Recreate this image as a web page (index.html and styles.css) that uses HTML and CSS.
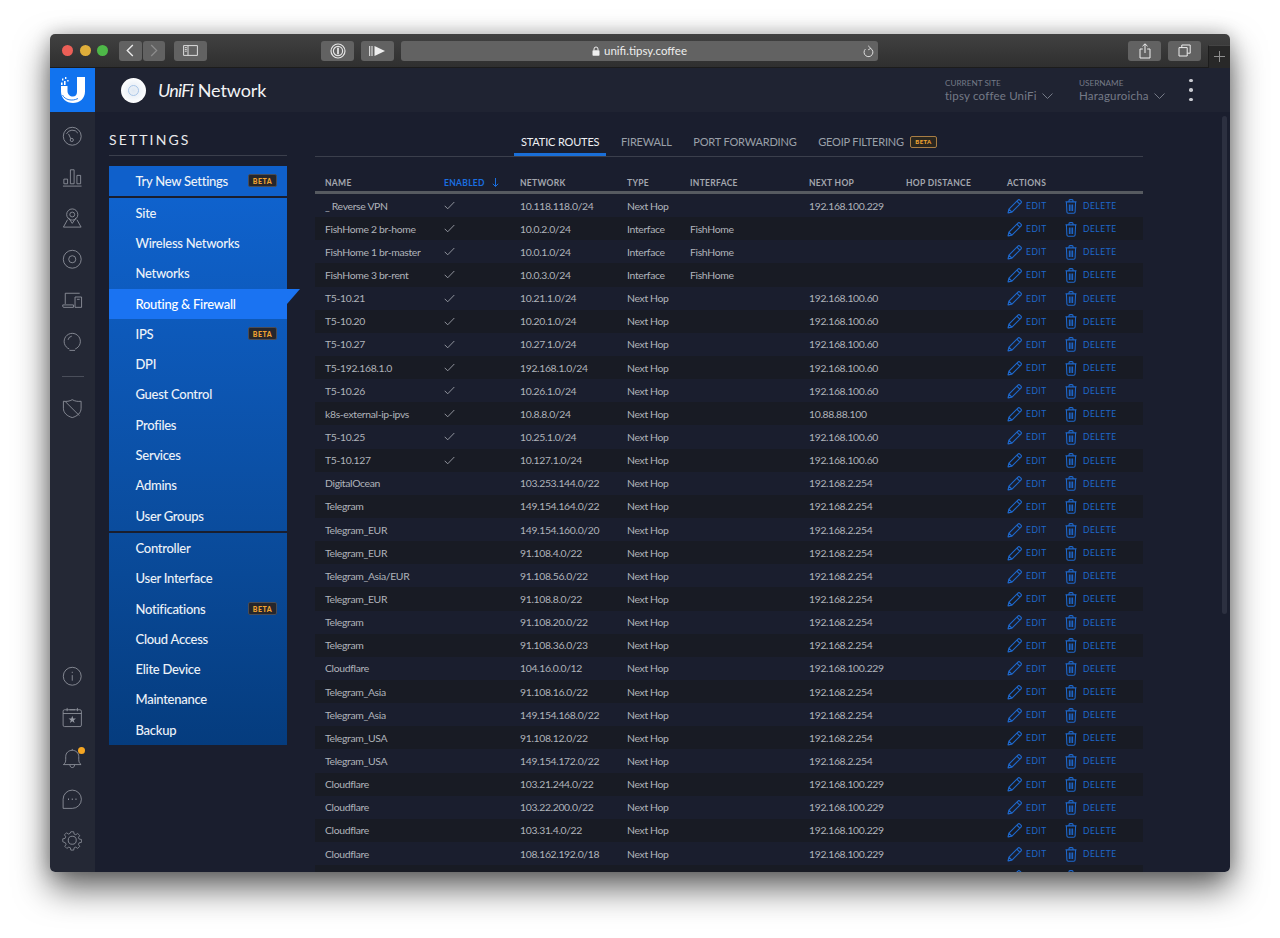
FILE: index.html
```html
<!DOCTYPE html>
<html lang="en">
<head>
<meta charset="utf-8">
<title>UniFi Network</title>
<link rel="stylesheet" href="styles.css">
</head>
<body>
<svg class="defs" width="0" height="0" aria-hidden="true">
  <symbol id="pencil" viewBox="0 0 14 14"><path d="M1 13l.8-3.6L10.2 1a1.3 1.3 0 0 1 1.8 0l1 1a1.3 1.3 0 0 1 0 1.8L4.6 12.2zM1.8 9.4l2.8 2.8M9.2 2l2.8 2.8" fill="none" stroke="currentColor" stroke-width="1.1" stroke-linejoin="round"/></symbol>
  <symbol id="trash" viewBox="0 0 12 15"><path d="M1.4 3h9.2l-.5 10a1.4 1.4 0 0 1-1.4 1.3H3.3A1.4 1.4 0 0 1 1.9 13zM.5 2.8h11M4 2.6V1.6a1 1 0 0 1 1-1h2a1 1 0 0 1 1 1v1M4.4 5.5v6.4M6 5.5v6.4M7.6 5.5v6.4" fill="none" stroke="currentColor" stroke-width="1.1"/></symbol>
  <symbol id="check" viewBox="0 0 11 9"><path d="M.7 4.8l3 3L10.3 1" fill="none" stroke="currentColor" stroke-width=".9"/></symbol>
</svg>

<div class="window">
  <div class="titlebar">
    <div class="lights"><i class="light red"></i><i class="light yellow"></i><i class="light green"></i></div>
    <div class="navbtns">
      <span class="btn btn-nav"><svg width="8" height="13" viewBox="0 0 8 13"><path d="M6.8 1L1.3 6.5l5.5 5.5" fill="none" stroke="#e8e8e8" stroke-width="1.4"/></svg></span>
      <span class="btn btn-nav"><svg width="8" height="13" viewBox="0 0 8 13"><path d="M1.2 1l5.5 5.5L1.2 12" fill="none" stroke="#8c8c8c" stroke-width="1.2"/></svg></span>
    </div>
    <span class="btn btn-side"><svg width="15" height="11" viewBox="0 0 15 11"><path d="M.6.6h13.8v9.8H.6zM5 .6v9.8M1.8 2.6h2M1.8 4.4h2M1.8 6.2h2" fill="none" stroke="#ddd" stroke-width="1"/></svg></span>
    <span class="btn btn-pass"><svg width="16" height="16" viewBox="0 0 16 16"><circle cx="8" cy="8" r="7" fill="none" stroke="#e4e4e4" stroke-width="1.2"/><circle cx="8" cy="8" r="4.6" fill="none" stroke="#e4e4e4" stroke-width="1.2"/><path d="M8 4.8v6.4" stroke="#e4e4e4" stroke-width="1.8"/></svg></span>
    <span class="btn btn-ext"><svg width="17" height="10" viewBox="0 0 17 10"><path d="M.7 0v10M3 0v10" stroke="#eee" stroke-width="1"/><path d="M5.5 0L16 5 5.5 10z" fill="#eee"/></svg></span>
    <div class="address">
      <span class="url"><svg width="8" height="10" viewBox="0 0 8 10"><path d="M2 4.4V3a2 2 0 0 1 4 0v1.4" fill="none" stroke="#eee" stroke-width="1"/><rect x=".5" y="4.2" width="7" height="5.5" rx=".8" fill="#eee"/></svg>unifi.tipsy.coffee</span>
      <svg class="reload" width="11" height="13" viewBox="0 0 11 13"><path d="M7.6 3.4A4.4 4.4 0 1 1 2.4 4.1M5.2 .8l2.6 2.6-2.6 1.4" fill="none" stroke="#ddd" stroke-width="1"/></svg>
    </div>
    <span class="btn btn-share"><svg width="12" height="16" viewBox="0 0 12 16"><path d="M3.8 6H1v9h10V6H8.2M6 10V1M3.5 3.2L6 .8l2.5 2.4" fill="none" stroke="#eee" stroke-width="1"/></svg></span>
    <span class="btn btn-tabs"><svg width="13" height="13" viewBox="0 0 13 13"><path d="M3.8 3.6V1h8.4v8.2H9.4M1 3.6h8.2V12H1z" fill="none" stroke="#eee" stroke-width="1"/></svg></span>
    <span class="newtab"><svg width="11" height="11" viewBox="0 0 11 11"><path d="M5.5 0v11M0 5.5h11" stroke="#8f8f8f" stroke-width="1"/></svg></span>
  </div>

  <div class="app">
    <aside class="rail">
      <div class="logo">
        <svg width="26" height="28" viewBox="0 0 26 28">
          <path d="M17 1h8v14.500C25 22.500 19.500 27 13 27 6.500 27 1 22.500 1 15.500V10h6.500v5c0 3.500 2.500 5.500 5.500 5.500 2 0 4-1.500 4-4.500z" fill="#fff"/>
          <path d="M2.500 19c2.500 5 9.500 6.500 15.500 3.500" fill="none" stroke="#1173ef" stroke-width=".9"/>
          <path d="M1 6.500h1.600v2.500H1zM4 5h1.600v4H4zM2 2.500h1.400v2H2zM5 1h1.400v2H5zM7.200 4h1.400v1.600H7.200z" fill="#fff"/>
        </svg>
      </div>
      <div class="rail-top">
        <svg class="ri" viewBox="0 0 22 22"><circle cx="11" cy="11" r="9.600"/><path d="M4.800 8.500A7 7 0 0 1 17 7.600M9.500 13.800L7 8.500"/><circle cx="10.500" cy="15" r="1.700"/></svg>
        <svg class="ri" viewBox="0 0 22 22"><path d="M1 20.500h20M2 13h4v5H2zM9 3h4v15H9zM16 9h4v9h-4z"/></svg>
        <svg class="ri" viewBox="0 0 22 22"><circle cx="11" cy="7" r="6"/><circle cx="11" cy="7" r="2.600"/><path d="M6 12.500L1.500 20.500h19L16 12.500M7 10.500l4 6 4-6"/></svg>
        <svg class="ri" viewBox="0 0 22 22"><circle cx="11" cy="11" r="9.600"/><circle cx="11" cy="11" r="3.800"/></svg>
        <svg class="ri" viewBox="0 0 22 22"><path d="M3.500 15V3.500h15.500M.8 16h11.500v2.600H2a1.200 1.200 0 0 1-1.200-1.200zM14 7.500h7v11.100h-7zM16 10h3"/></svg>
        <svg class="ri" viewBox="0 0 22 22"><path d="M14.200 19.300a8.700 8.700 0 1 0-6.400 0M8 20.800h6M10.500 5.500a5 5 0 0 0-4 4"/></svg>
        <i class="rail-rule"></i>
        <svg class="ri" viewBox="0 0 22 22"><path d="M1.500 3.500C5 4 8 3.500 11 1.800c3 1.700 6 2.200 9.500 1.700V11c0 5-4 8.500-9.500 10C5.500 19.500 1.500 16 1.500 11zM3.500 3.800l15 15"/></svg>
      </div>
      <div class="rail-bottom">
        <svg class="ri" viewBox="0 0 22 22"><circle cx="11" cy="11" r="9.600"/><path d="M11 9.800v6M11 6.200v1.400"/></svg>
        <svg class="ri" viewBox="0 0 22 22"><rect x="1.200" y="3" width="19.600" height="18" rx="1.500"/><path d="M1.200 7h19.600M5.500 1v3.500M16.500 1v3.500M8 3h6"/><path class="star" d="M11 9.500l1 2.900h3l-2.400 1.800.9 2.900-2.500-1.800-2.500 1.800.9-2.900L7 12.400h3z"/></svg>
        <span class="bell">
          <svg class="ri" viewBox="0 0 22 22"><path d="M1.500 17.800c1.800-1.200 2.500-3 2.500-5.300V9.200C4 5.300 7 2.500 11 2.500s7 2.800 7 6.700v3.300c0 2.300.7 4.100 2.500 5.300zM8.500 18c0 1.800 1 3 2.500 3s2.500-1.200 2.500-3M11 1v1.500"/></svg>
          <i class="bell-dot"></i>
        </span>
        <svg class="ri" viewBox="0 0 22 22"><path d="M1.200 11A9.800 9.800 0 1 1 11 20.800H1.200z"/><path class="dots" d="M6.500 11h1M10.500 11h1M14.500 11h1"/></svg>
        <svg class="ri" viewBox="0 0 22 22"><circle cx="11" cy="11" r="4.300"/><path d="M9.300 1h3.400l.5 2.700 1.900.8 2.300-1.500 2.400 2.400-1.500 2.300.8 1.900 2.700.5v3.400l-2.700.5-.8 1.900 1.500 2.300-2.400 2.400-2.300-1.500-1.900.8-.5 2.700H9.300l-.5-2.700-1.900-.8-2.300 1.500-2.400-2.400 1.500-2.300-.8-1.900L-.2 12.700V9.300l2.700-.5.8-1.900-1.500-2.300 2.400-2.400 2.300 1.500 1.900-.8z" transform="translate(1 1) scale(.91)"/></svg>
      </div>
    </aside>

    <div class="content">
      <header class="topbar">
        <div class="brand">
          <span class="ap"><i></i></span>
          <span class="brand-name"><em>UniFi</em> Network</span>
        </div>
        <div class="picker picker-site">
          <span class="picker-label">CURRENT SITE</span>
          <span class="picker-value">tipsy coffee UniFi <svg width="11" height="6" viewBox="0 0 11 6"><path d="M.5.500l5 5 5-5" fill="none" stroke="currentColor"/></svg></span>
        </div>
        <div class="picker picker-user">
          <span class="picker-label">USERNAME</span>
          <span class="picker-value">Haraguroicha <svg width="11" height="6" viewBox="0 0 11 6"><path d="M.5.500l5 5 5-5" fill="none" stroke="currentColor"/></svg></span>
        </div>
        <div class="kebab"><i></i><i></i><i></i></div>
      </header>

      <main class="main">
        <section class="settings">
          <h1 class="settings-title">SETTINGS</h1>
          <nav class="menu">
            <div class="group group-a"><a class="item">Try New Settings<b class="beta">BETA</b></a></div>
            <div class="group group-b">
              <a class="item">Site</a>
              <a class="item">Wireless Networks</a>
              <a class="item">Networks</a>
              <a class="item active">Routing &amp; Firewall</a>
              <a class="item">IPS<b class="beta">BETA</b></a>
              <a class="item">DPI</a>
              <a class="item">Guest Control</a>
              <a class="item">Profiles</a>
              <a class="item">Services</a>
              <a class="item">Admins</a>
              <a class="item">User Groups</a>
            </div>
            <div class="group group-c">
              <a class="item">Controller</a>
              <a class="item">User Interface</a>
              <a class="item">Notifications<b class="beta">BETA</b></a>
              <a class="item">Cloud Access</a>
              <a class="item">Elite Device</a>
              <a class="item">Maintenance</a>
              <a class="item">Backup</a>
            </div>
          </nav>
        </section>

        <section class="routes">
          <div class="tabs">
            <a class="tab current">STATIC ROUTES</a>
            <a class="tab">FIREWALL</a>
            <a class="tab">PORT FORWARDING</a>
            <a class="tab">GEOIP FILTERING<b class="beta beta-outline">BETA</b></a>
          </div>
          <div class="table">
            <div class="row head"><span>NAME</span><span class="sorted">ENABLED <svg width="7" height="9" viewBox="0 0 7 9"><path d="M3.500 0v8.400M.8 5.800l2.700 2.700 2.700-2.700" fill="none" stroke="currentColor"/></svg></span><span>NETWORK</span><span>TYPE</span><span>INTERFACE</span><span>NEXT HOP</span><span>HOP DISTANCE</span><span>ACTIONS</span></div>
            <div class="row"><span>_ Reverse VPN</span><span><svg class="ck"><use href="#check"/></svg></span><span>10.118.118.0/24</span><span>Next Hop</span><span></span><span>192.168.100.229</span><span></span><span class="act"><svg class="pen"><use href="#pencil"/></svg><a class="edit">EDIT</a><svg class="bin"><use href="#trash"/></svg><a>DELETE</a></span></div>
            <div class="row"><span>FishHome 2 br-home</span><span><svg class="ck"><use href="#check"/></svg></span><span>10.0.2.0/24</span><span>Interface</span><span>FishHome</span><span></span><span></span><span class="act"><svg class="pen"><use href="#pencil"/></svg><a class="edit">EDIT</a><svg class="bin"><use href="#trash"/></svg><a>DELETE</a></span></div>
            <div class="row"><span>FishHome 1 br-master</span><span><svg class="ck"><use href="#check"/></svg></span><span>10.0.1.0/24</span><span>Interface</span><span>FishHome</span><span></span><span></span><span class="act"><svg class="pen"><use href="#pencil"/></svg><a class="edit">EDIT</a><svg class="bin"><use href="#trash"/></svg><a>DELETE</a></span></div>
            <div class="row"><span>FishHome 3 br-rent</span><span><svg class="ck"><use href="#check"/></svg></span><span>10.0.3.0/24</span><span>Interface</span><span>FishHome</span><span></span><span></span><span class="act"><svg class="pen"><use href="#pencil"/></svg><a class="edit">EDIT</a><svg class="bin"><use href="#trash"/></svg><a>DELETE</a></span></div>
            <div class="row"><span>T5-10.21</span><span><svg class="ck"><use href="#check"/></svg></span><span>10.21.1.0/24</span><span>Next Hop</span><span></span><span>192.168.100.60</span><span></span><span class="act"><svg class="pen"><use href="#pencil"/></svg><a class="edit">EDIT</a><svg class="bin"><use href="#trash"/></svg><a>DELETE</a></span></div>
            <div class="row"><span>T5-10.20</span><span><svg class="ck"><use href="#check"/></svg></span><span>10.20.1.0/24</span><span>Next Hop</span><span></span><span>192.168.100.60</span><span></span><span class="act"><svg class="pen"><use href="#pencil"/></svg><a class="edit">EDIT</a><svg class="bin"><use href="#trash"/></svg><a>DELETE</a></span></div>
            <div class="row"><span>T5-10.27</span><span><svg class="ck"><use href="#check"/></svg></span><span>10.27.1.0/24</span><span>Next Hop</span><span></span><span>192.168.100.60</span><span></span><span class="act"><svg class="pen"><use href="#pencil"/></svg><a class="edit">EDIT</a><svg class="bin"><use href="#trash"/></svg><a>DELETE</a></span></div>
            <div class="row"><span>T5-192.168.1.0</span><span><svg class="ck"><use href="#check"/></svg></span><span>192.168.1.0/24</span><span>Next Hop</span><span></span><span>192.168.100.60</span><span></span><span class="act"><svg class="pen"><use href="#pencil"/></svg><a class="edit">EDIT</a><svg class="bin"><use href="#trash"/></svg><a>DELETE</a></span></div>
            <div class="row"><span>T5-10.26</span><span><svg class="ck"><use href="#check"/></svg></span><span>10.26.1.0/24</span><span>Next Hop</span><span></span><span>192.168.100.60</span><span></span><span class="act"><svg class="pen"><use href="#pencil"/></svg><a class="edit">EDIT</a><svg class="bin"><use href="#trash"/></svg><a>DELETE</a></span></div>
            <div class="row"><span>k8s-external-ip-ipvs</span><span><svg class="ck"><use href="#check"/></svg></span><span>10.8.8.0/24</span><span>Next Hop</span><span></span><span>10.88.88.100</span><span></span><span class="act"><svg class="pen"><use href="#pencil"/></svg><a class="edit">EDIT</a><svg class="bin"><use href="#trash"/></svg><a>DELETE</a></span></div>
            <div class="row"><span>T5-10.25</span><span><svg class="ck"><use href="#check"/></svg></span><span>10.25.1.0/24</span><span>Next Hop</span><span></span><span>192.168.100.60</span><span></span><span class="act"><svg class="pen"><use href="#pencil"/></svg><a class="edit">EDIT</a><svg class="bin"><use href="#trash"/></svg><a>DELETE</a></span></div>
            <div class="row"><span>T5-10.127</span><span><svg class="ck"><use href="#check"/></svg></span><span>10.127.1.0/24</span><span>Next Hop</span><span></span><span>192.168.100.60</span><span></span><span class="act"><svg class="pen"><use href="#pencil"/></svg><a class="edit">EDIT</a><svg class="bin"><use href="#trash"/></svg><a>DELETE</a></span></div>
            <div class="row"><span>DigitalOcean</span><span></span><span>103.253.144.0/22</span><span>Next Hop</span><span></span><span>192.168.2.254</span><span></span><span class="act"><svg class="pen"><use href="#pencil"/></svg><a class="edit">EDIT</a><svg class="bin"><use href="#trash"/></svg><a>DELETE</a></span></div>
            <div class="row"><span>Telegram</span><span></span><span>149.154.164.0/22</span><span>Next Hop</span><span></span><span>192.168.2.254</span><span></span><span class="act"><svg class="pen"><use href="#pencil"/></svg><a class="edit">EDIT</a><svg class="bin"><use href="#trash"/></svg><a>DELETE</a></span></div>
            <div class="row"><span>Telegram_EUR</span><span></span><span>149.154.160.0/20</span><span>Next Hop</span><span></span><span>192.168.2.254</span><span></span><span class="act"><svg class="pen"><use href="#pencil"/></svg><a class="edit">EDIT</a><svg class="bin"><use href="#trash"/></svg><a>DELETE</a></span></div>
            <div class="row"><span>Telegram_EUR</span><span></span><span>91.108.4.0/22</span><span>Next Hop</span><span></span><span>192.168.2.254</span><span></span><span class="act"><svg class="pen"><use href="#pencil"/></svg><a class="edit">EDIT</a><svg class="bin"><use href="#trash"/></svg><a>DELETE</a></span></div>
            <div class="row"><span>Telegram_Asia/EUR</span><span></span><span>91.108.56.0/22</span><span>Next Hop</span><span></span><span>192.168.2.254</span><span></span><span class="act"><svg class="pen"><use href="#pencil"/></svg><a class="edit">EDIT</a><svg class="bin"><use href="#trash"/></svg><a>DELETE</a></span></div>
            <div class="row"><span>Telegram_EUR</span><span></span><span>91.108.8.0/22</span><span>Next Hop</span><span></span><span>192.168.2.254</span><span></span><span class="act"><svg class="pen"><use href="#pencil"/></svg><a class="edit">EDIT</a><svg class="bin"><use href="#trash"/></svg><a>DELETE</a></span></div>
            <div class="row"><span>Telegram</span><span></span><span>91.108.20.0/22</span><span>Next Hop</span><span></span><span>192.168.2.254</span><span></span><span class="act"><svg class="pen"><use href="#pencil"/></svg><a class="edit">EDIT</a><svg class="bin"><use href="#trash"/></svg><a>DELETE</a></span></div>
            <div class="row"><span>Telegram</span><span></span><span>91.108.36.0/23</span><span>Next Hop</span><span></span><span>192.168.2.254</span><span></span><span class="act"><svg class="pen"><use href="#pencil"/></svg><a class="edit">EDIT</a><svg class="bin"><use href="#trash"/></svg><a>DELETE</a></span></div>
            <div class="row"><span>Cloudflare</span><span></span><span>104.16.0.0/12</span><span>Next Hop</span><span></span><span>192.168.100.229</span><span></span><span class="act"><svg class="pen"><use href="#pencil"/></svg><a class="edit">EDIT</a><svg class="bin"><use href="#trash"/></svg><a>DELETE</a></span></div>
            <div class="row"><span>Telegram_Asia</span><span></span><span>91.108.16.0/22</span><span>Next Hop</span><span></span><span>192.168.2.254</span><span></span><span class="act"><svg class="pen"><use href="#pencil"/></svg><a class="edit">EDIT</a><svg class="bin"><use href="#trash"/></svg><a>DELETE</a></span></div>
            <div class="row"><span>Telegram_Asia</span><span></span><span>149.154.168.0/22</span><span>Next Hop</span><span></span><span>192.168.2.254</span><span></span><span class="act"><svg class="pen"><use href="#pencil"/></svg><a class="edit">EDIT</a><svg class="bin"><use href="#trash"/></svg><a>DELETE</a></span></div>
            <div class="row"><span>Telegram_USA</span><span></span><span>91.108.12.0/22</span><span>Next Hop</span><span></span><span>192.168.2.254</span><span></span><span class="act"><svg class="pen"><use href="#pencil"/></svg><a class="edit">EDIT</a><svg class="bin"><use href="#trash"/></svg><a>DELETE</a></span></div>
            <div class="row"><span>Telegram_USA</span><span></span><span>149.154.172.0/22</span><span>Next Hop</span><span></span><span>192.168.2.254</span><span></span><span class="act"><svg class="pen"><use href="#pencil"/></svg><a class="edit">EDIT</a><svg class="bin"><use href="#trash"/></svg><a>DELETE</a></span></div>
            <div class="row"><span>Cloudflare</span><span></span><span>103.21.244.0/22</span><span>Next Hop</span><span></span><span>192.168.100.229</span><span></span><span class="act"><svg class="pen"><use href="#pencil"/></svg><a class="edit">EDIT</a><svg class="bin"><use href="#trash"/></svg><a>DELETE</a></span></div>
            <div class="row"><span>Cloudflare</span><span></span><span>103.22.200.0/22</span><span>Next Hop</span><span></span><span>192.168.100.229</span><span></span><span class="act"><svg class="pen"><use href="#pencil"/></svg><a class="edit">EDIT</a><svg class="bin"><use href="#trash"/></svg><a>DELETE</a></span></div>
            <div class="row"><span>Cloudflare</span><span></span><span>103.31.4.0/22</span><span>Next Hop</span><span></span><span>192.168.100.229</span><span></span><span class="act"><svg class="pen"><use href="#pencil"/></svg><a class="edit">EDIT</a><svg class="bin"><use href="#trash"/></svg><a>DELETE</a></span></div>
            <div class="row"><span>Cloudflare</span><span></span><span>108.162.192.0/18</span><span>Next Hop</span><span></span><span>192.168.100.229</span><span></span><span class="act"><svg class="pen"><use href="#pencil"/></svg><a class="edit">EDIT</a><svg class="bin"><use href="#trash"/></svg><a>DELETE</a></span></div>
            <div class="row"><span></span><span></span><span></span><span></span><span></span><span></span><span></span><span class="act"><svg class="pen"><use href="#pencil"/></svg><a class="edit"></a><svg class="bin"><use href="#trash"/></svg><a></a></span></div>
          </div>
        </section>
        <i class="scrollbar"></i>
      </main>
    </div>
  </div>
</div>
</body>
</html>
```

FILE: styles.css
```css
* { box-sizing: border-box; }
html, body { margin: 0; height: 938px; overflow: hidden; background: #fff; }
body { font-family: "Lato", "Liberation Sans", sans-serif; color: #b4b8bf; }
.defs { position: absolute; }
a { text-decoration: none; color: inherit; }

.window {
  width: 1180px; height: 838px; margin: 34px 0 0 50px;
  display: flex; flex-direction: column;
  border-radius: 5px; overflow: hidden;
  box-shadow: 0 16px 34px rgba(0,0,0,.62), 0 0 18px rgba(0,0,0,.22);
}

/* browser chrome */
.titlebar {
  height: 34px; flex: none; display: flex; align-items: center;
  padding: 0 0 0 12px;
  background: linear-gradient(#414141, #2f2f2f);
  border-bottom: 1px solid #1c1c1c;
}
.lights { display: flex; gap: 6.500px; width: 57px; }
.light { width: 11px; height: 11px; border-radius: 50%; }
.red { background: #ec5f57; }
.yellow { background: #dfae3a; }
.green { background: #4eb848; }
.btn {
  height: 20px; border-radius: 3px; background: #626262;
  display: flex; align-items: center; justify-content: center; flex: none;
}
.navbtns { display: flex; gap: 1px; }
.btn-nav { width: 22.500px; }
.btn-side { width: 33px; margin-left: 9px; }
.btn-pass { width: 33px; margin-left: 114px; }
.btn-ext { width: 33px; margin-left: 7px; }
.address {
  width: 477px; height: 20px; margin-left: 7px; border-radius: 3px;
  background: #626262; display: flex; align-items: center; justify-content: center;
  position: relative; flex: none;
}
.url { font-size: 11.500px; color: #eee; display: flex; align-items: center; gap: 4px; }
.reload { position: absolute; right: 4px; top: 4px; }
.btn-share { width: 33px; margin-left: 250px; }
.btn-tabs { width: 33px; margin-left: 6.500px; }
.newtab {
  width: 22px; height: 23px; margin: 11px 0 0 7px; background: #282828; border-top: 1px solid #444;
  border-left: 1px solid #1c1c1c; display: flex; align-items: center; justify-content: center; flex: none;
}

.app { flex: 1; display: flex; min-height: 0; }

/* left rail */
.rail { width: 45px; flex: none; background: #242835; display: flex; flex-direction: column; align-items: center; }
.logo { width: 45px; height: 44px; flex: none; background: #1173ef; display: flex; align-items: center; justify-content: center; }
.rail-top { display: flex; flex-direction: column; align-items: center; gap: 20.500px; padding-top: 14px; }
.rail-bottom { margin-top: auto; display: flex; flex-direction: column; align-items: center; gap: 20.500px; padding-bottom: 22px; }
.ri { width: 20.500px; height: 20.500px; display: block; fill: none; stroke: #9498a2; stroke-width: .9; overflow: visible; }
.ri .star { fill: #9498a2; stroke: none; }
.ri .dots { stroke-width: 1.600; }
.rail-rule { width: 22px; height: 1px; background: #4a4e5a; margin: 4px 0 0; }
.bell { position: relative; display: block; }
.bell-dot { position: absolute; right: -2px; top: -1px; width: 7px; height: 7px; border-radius: 50%; background: #f5a623; }

.content { flex: 1; min-width: 0; display: flex; flex-direction: column; background: #1a1e2e; }

/* top bar */
.topbar { height: 44px; flex: none; background: #1f2332; display: flex; align-items: center; position: relative; }
.brand { display: flex; align-items: center; margin-left: 26px; width: 824px; gap: 12px; }
.ap {
  width: 25px; height: 25px; border-radius: 50%; background: radial-gradient(circle, #dfe8f3 0, #fff 75%, #d9dde2 100%);
  display: flex; align-items: center; justify-content: center;
}
.ap i { width: 11px; height: 11px; border-radius: 50%; border: 1px solid #a9c6e8; }
.brand-name { font-size: 18px; font-weight: 400; color: #f2f3f5; white-space: nowrap; letter-spacing: -.1px; }
.brand-name em { font-weight: 400; font-style: italic; letter-spacing: -.8px; }
.picker { display: flex; flex-direction: column; color: #757a87; white-space: nowrap; }
.picker-site { width: 134px; }
.picker-label { font-size: 8.200px; line-height: 11px; }
.picker-value { font-size: 11.500px; line-height: 14px; letter-spacing: .2px; }
.picker-value svg { margin-left: 2px; vertical-align: 1px; }
.picker-user { width: 110px; }
.kebab { display: flex; flex-direction: column; gap: 6px; }
.kebab i { width: 3.500px; height: 3.500px; border-radius: 50%; background: #c8cad0; }

/* main */
.main { flex: 1; min-height: 0; display: flex; padding-left: 14px; gap: 28px; overflow: hidden; position: relative; }
.settings { width: 178px; flex: none; }
.settings-title {
  margin: 0; height: 44px; padding-top: 19px; border-bottom: 1px solid #3b3f4c;
  font-size: 14px; line-height: 17px; font-weight: 400; letter-spacing: 2.100px; color: #e8e9ec;
}
.menu { margin-top: 10px; display: flex; flex-direction: column; gap: 2px; }
.group-a { background: #0f60cb; }
.group-b { background: linear-gradient(#0f62cd, #0a4c9d); }
.group-c { background: linear-gradient(#0a4c9d, #053c7e); }
.item {
  height: 30.300px; padding: 0 10px 1px 26.500px; display: flex; align-items: center; justify-content: space-between;
  font-size: 13px; font-weight: 500; letter-spacing: -.27px; color: #edf2f8; position: relative;
}
.group-a .item { height: 30px; }
.item.active { background: #1a73f2; color: #fff; }
.item.active::after {
  content: ""; position: absolute; left: 100%; top: 0; width: 13px; height: 15px;
  background: #1a73f2; clip-path: polygon(0 0, 100% 0, 0 100%);
}
.beta {
  width: 29px; height: 13px; border-radius: 2px; background: #25262c; border: 1px solid #4a4c55;
  color: #f0a331; font-size: 7px; font-weight: 900; letter-spacing: .5px;
  display: flex; align-items: center; justify-content: center;
}

/* routes */
.routes { width: 828px; flex: none; }
.tabs { height: 45px; border-bottom: 1px solid #3b3f4c; padding: 14px 0 0 199px; display: flex; gap: 7.500px; font-size: 11px; letter-spacing: -.17px; }
.tab { height: 30px; padding: 9px 7px 0; color: #9ba0a9; display: flex; align-items: flex-start; line-height: 14px; }
.tab.current { color: #eef0f3; border-bottom: 3px solid #1a6fd8; }
.beta-outline { width: 27px; height: 12px; margin: 1px 0 0 6px; border-color: #a87d44; font-size: 6px; background: #2a2720; letter-spacing: .4px; }
.table { padding-top: 17px; }
.row {
  display: grid; grid-template-columns: 119px 76px 107px 63px 119px 97px 101px 1fr;
  height: 23.150px; padding-left: 10px; align-items: center;
  font-size: 10.400px; letter-spacing: -.33px; color: #b0b4bb; white-space: nowrap;
}
.row:nth-child(odd) { background: #181b24; }
.row.head {
  height: 20px; padding-bottom: 3px; background: none; border-bottom: 3px solid #565a60;
  font-size: 8.500px; font-weight: 700; letter-spacing: .3px; color: #a3a7ae;
  align-items: end;
}
.sorted { color: #1a6fe0; }
.sorted svg { margin-left: 5px; vertical-align: -1px; }
.ck { width: 11px; height: 9px; display: block; color: #9ea2aa; }
.act { display: flex; align-items: center; padding-top: 1px; color: #1e68cc; font-size: 8.500px; letter-spacing: .5px; }
.pen { width: 15px; height: 15px; flex: none; }
.bin { width: 12px; height: 15px; flex: none; }
.edit { width: 39px; margin-left: 4px; }
.act .bin + a { margin-left: 6px; }

.scrollbar { position: absolute; left: 1127px; top: 4px; width: 5px; height: 498px; border-radius: 3px; background: #2c3040; }
```
